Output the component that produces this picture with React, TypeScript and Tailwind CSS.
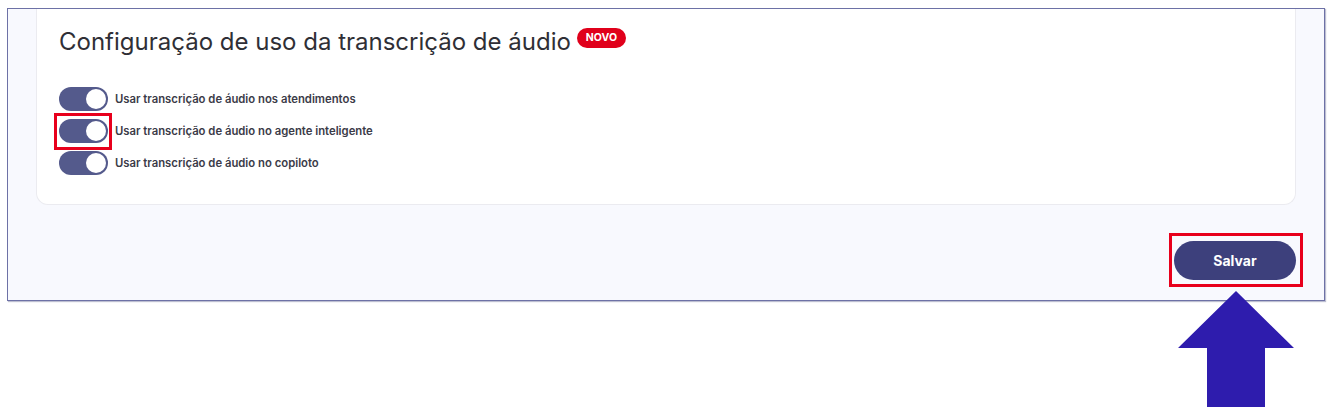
import React from "react";

const labels = [
  "Usar transcrição de áudio nos atendimentos",
  "Usar transcrição de áudio no agente inteligente",
  "Usar transcrição de áudio no copiloto",
];

function Toggle() {
  return (
    <div className="relative h-[24px] w-[49px] shrink-0 rounded-full bg-[#545a8c]">
      <div className="absolute right-[2px] top-[2px] h-[20px] w-[20px] rounded-full bg-white" />
    </div>
  );
}

export default function App() {
  return (
    <div className="relative h-[414px] w-[1333px] bg-white" style={{ fontFamily: "Inter, 'Noto Sans', sans-serif" }}>
      <div className="absolute left-[7px] top-[8px] h-[293px] w-[1318px] border border-[#6d71a6] bg-[#f8f9fe] shadow-[1px_1px_1px_rgba(90,95,140,0.4)]">
        <div className="flex h-full flex-col px-[28px]">
          <div className="h-[196px] rounded-b-[12px] border-x border-b border-[#ebebf0] bg-white pl-[22px]">
            <div className="mt-[17px] flex items-start">
              <h1 className="text-[24px] leading-[32px] text-[#2f2f36]">
                Configuração de uso da transcrição de áudio
              </h1>
              <span className="ml-[6px] mt-[2px] rounded-full bg-[#e0001b] px-[9px] text-[10.5px] font-bold leading-[20px] text-white">
                NOVO
              </span>
            </div>
            <div className="mt-[29px] flex flex-col gap-[8px]">
              {labels.map((l, i) => (
                <div key={i} className="relative flex items-center gap-[7px]">
                  <Toggle />
                  <span className="text-[11.3px] font-semibold text-[#3b3b48]">{l}</span>
                  {i === 1 && (
                    <div className="absolute left-[-5px] top-[-6px] h-[37px] w-[58px] border-[3px] border-[#e8001c]" />
                  )}
                </div>
              ))}
            </div>
          </div>
          <div className="mt-[36px] flex justify-end">
            <div className="relative">
              <button className="h-[39px] w-[122px] rounded-full bg-[#3d407c] text-[14px] font-bold text-white">
                Salvar
              </button>
              <div className="absolute left-[-5px] top-[-8px] h-[54px] w-[134px] border-[3px] border-[#e8001c]" />
            </div>
          </div>
        </div>
      </div>
      <svg className="absolute left-[1177px] top-[290px]" width="118" height="118" viewBox="0 0 118 118">
        <polygon points="59,1 117,58 88,58 88,117 30,117 30,58 1,58" fill="#2e1cad" />
      </svg>
    </div>
  );
}
